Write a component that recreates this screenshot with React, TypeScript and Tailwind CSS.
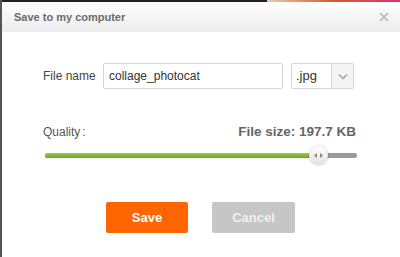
export default function App() {
  return (
    <div className="w-[400px] h-[257px] overflow-hidden bg-white font-['Liberation_Sans',Arial,sans-serif] flex flex-col border-l-2 border-[#555]">
      {/* top edge */}
      <div className="h-[2px] flex shrink-0">
        <div className="w-[265px] bg-[#222]" />
        <div className="flex-1 bg-gradient-to-r from-[#e9c9a9] via-[#d4582a] to-[#e0306a]" />
      </div>

      {/* Header */}
      <div className="h-[30px] shrink-0 flex items-center justify-between pl-[12px] pr-[11px] bg-gradient-to-b from-white to-[#ececec]">
        <span className="text-[11px] font-bold text-[#6b6b6b]">Save to my computer</span>
        <svg width="10" height="10" viewBox="0 0 10 10" className="text-[#b5b5b5]">
          <path d="M1 1L9 9M9 1L1 9" stroke="currentColor" strokeWidth="1.6" />
        </svg>
      </div>

      {/* Body */}
      <div className="flex-1 pl-[41px] pr-[43px] pt-[31px]">
        <div className="flex items-center h-[26px]">
          <span className="w-[60px] text-[12px] text-[#444]">File name</span>
          <div className="w-[180px] h-[26px] border border-[#d6d6d6] rounded-[2px] flex items-center px-[5px] text-[12px] text-[#333]">
            collage_photocat
          </div>
          <div className="ml-[8px] w-[63px] h-[26px] border border-[#d6d6d6] rounded-[2px] flex">
            <span className="flex-1 flex items-center pl-[4px] text-[13px] text-[#333]">.jpg</span>
            <span className="w-[22px] border-l border-[#d6d6d6] bg-[#f4f4f4] flex items-center justify-center">
              <svg width="10" height="7" viewBox="0 0 10 7" className="text-[#a8a8a8]">
                <path d="M1 1.5L5 5.5L9 1.5" fill="none" stroke="currentColor" strokeWidth="1.6" />
              </svg>
            </span>
          </div>
        </div>

        <div className="mt-[33px] flex justify-between items-center text-[12px] pr-[1px]">
          <span className="text-[#555]">Quality<span className="ml-[2px]">:</span></span>
          <span className="font-bold text-[#666] text-[13.5px]">File size: 197.7 KB</span>
        </div>

        <div className="relative mt-[11px] h-[5px] rounded-full bg-[#9a9a9a] w-[312px] ml-[2px]">
          <div className="h-full w-[274px] rounded-full bg-gradient-to-b from-[#9ccc4a] to-[#6aa424]" />
          <div className="absolute left-[264px] top-[-7px] w-[19px] h-[19px] rounded-full bg-gradient-to-b from-white to-[#e2e2e2] shadow-[0_0_2px_rgba(0,0,0,0.35)] flex items-center justify-center gap-[1px]">
            <svg width="9" height="5" viewBox="0 0 9 5" className="text-[#888]">
              <path d="M3 0L0 2.5L3 5Z M6 0L9 2.5L6 5Z" fill="currentColor" />
            </svg>
          </div>
        </div>

        <div className="mt-[44px] flex gap-[24px] pl-[63px]">
          <button className="w-[82px] h-[31px] rounded-[2px] bg-[#ff6600] text-white text-[13px] font-bold">Save</button>
          <button className="w-[83px] h-[31px] rounded-[2px] bg-[#c6c6c6] text-[#f0f0f0] text-[13px] font-bold">Cancel</button>
        </div>
      </div>
    </div>
  );
}
